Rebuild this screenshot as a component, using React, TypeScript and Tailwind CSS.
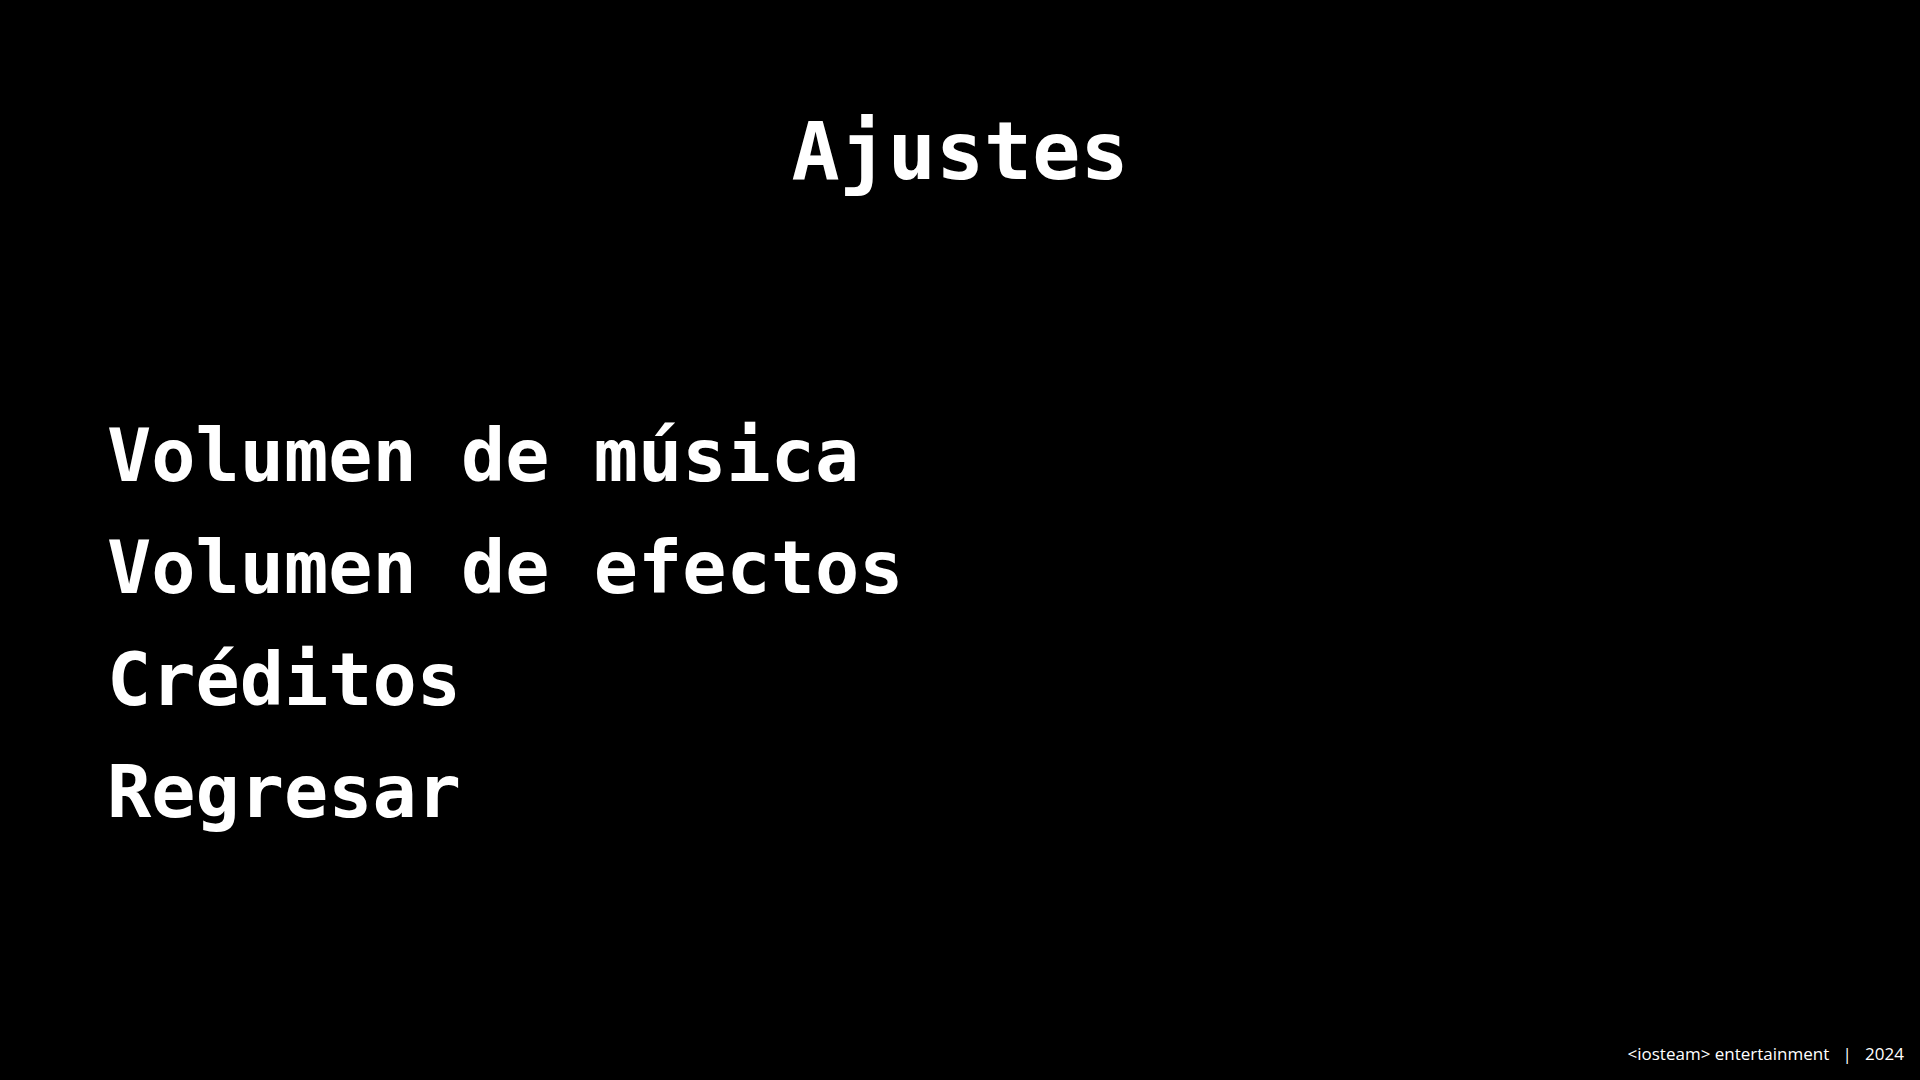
const menuItems = ['Volumen de música', 'Volumen de efectos', 'Créditos', 'Regresar']

export default function App() {
  return (
    <div className="flex h-screen w-full flex-col bg-black text-white">
      <h1 className="pt-[104px] text-center font-['DejaVu_Sans_Mono',monospace] text-[80px] font-bold leading-[96px]">
        Ajustes
      </h1>

      <ul className="mt-[200px] flex flex-col pl-[107px] font-['DejaVu_Sans_Mono',monospace] text-[73.5px] font-bold leading-[112px]">
        {menuItems.map((item) => (
          <li key={item}>{item}</li>
        ))}
      </ul>

      <footer className="mt-auto flex justify-end pb-[14px] pr-4 font-['Open_Sans',sans-serif] text-[17px] leading-6 text-white">
        <span className="whitespace-pre">{'<iosteam> entertainment   |   2024'}</span>
      </footer>
    </div>
  )
}
